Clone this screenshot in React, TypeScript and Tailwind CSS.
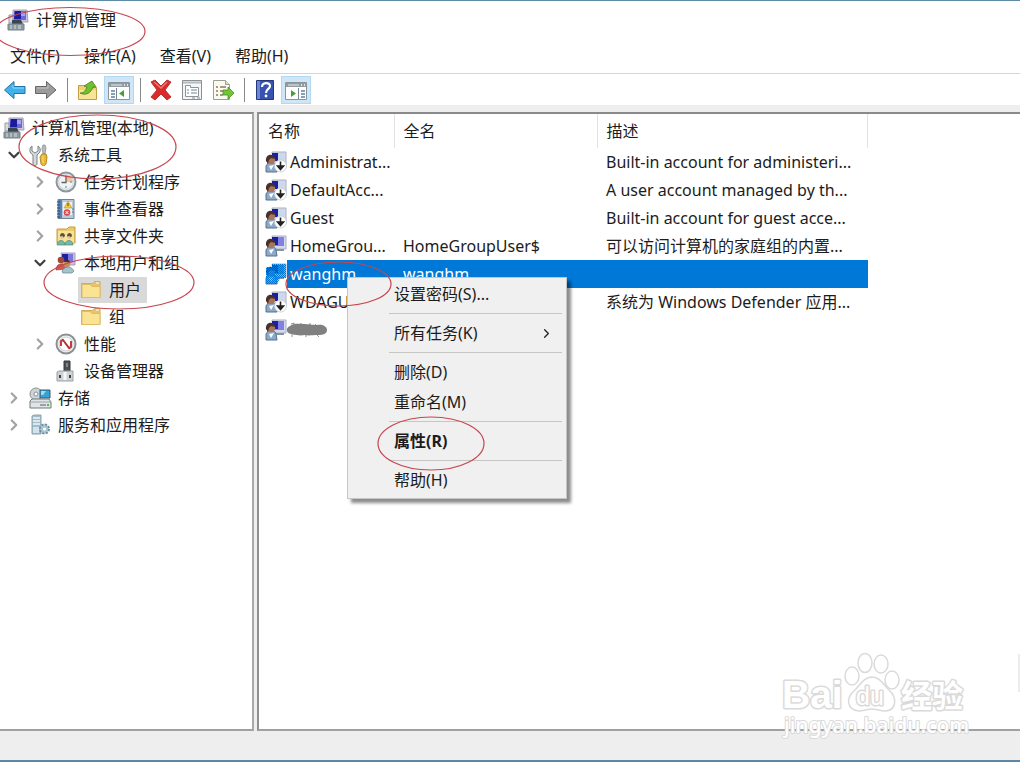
import type { ReactNode } from 'react'
import { ChevronDown, ChevronRight } from 'lucide-react'
import clsx from 'clsx'

/* ---------- icons ---------- */

function ComputerIcon() {
  return (
    <svg width="22" height="22" viewBox="0 0 22 22" aria-hidden="true">
      <path d="M6 1h14l1 12H6z" fill="#c9c6dc" stroke="#a3a1b8" />
      <path d="M7 2h12v9H7z" fill="#6f68d8" />
      <path d="M8 2h6v8H7z" fill="#1a1a9c" />
      <path d="M14 3h4v4h-4z" fill="#a9a4f0" />
      <path d="M2 6h4v8H2z" fill="#d6dce0" stroke="#8f9ba3" />
      <path d="M5 11l9 0 2 4H5z" fill="#3d4350" />
      <path d="M1 15h16v6H1z" fill="#8c999f" stroke="#76838a" />
      <path d="M3 17h2M7 17h2M11 17h3M3 19h2M7 19h2M11 19h3" stroke="#d8dfe2" />
    </svg>
  )
}

function ToolsIcon() {
  return (
    <svg width="22" height="22" viewBox="0 0 22 22" aria-hidden="true">
      <path d="M3 2v5l3 2 3-2V2c3 2 3 6 0 8l-1 1v9c0 2-4 2-4 0v-9C0 9 0 4 3 2z" fill="#d5d9db" stroke="#7b8286" />
      <path d="M14 1h2l1 3-1 6h-2l-1-6z" fill="#b7bcc0" stroke="#83898c" strokeWidth=".7" />
      <path d="M13 10h4l1 3-1 7c-1 2-4 2-5 0l-1-7z" fill="#e9b935" stroke="#b98a1c" />
      <path d="M14 12v7" stroke="#f8e08a" />
    </svg>
  )
}

function ClockIcon() {
  return (
    <svg width="22" height="22" viewBox="0 0 22 22" aria-hidden="true">
      <circle cx="11" cy="11" r="9.5" fill="#e9edef" stroke="#8f979c" strokeWidth="2" />
      <circle cx="11" cy="11" r="7.3" fill="#eef4f8" stroke="#bcc4ca" strokeWidth=".6" />
      <path d="M11 4a7 7 0 0 1 7 7h-7z" fill="#f2c29a" />
      <path d="M11 4.500v7H6.500" fill="none" stroke="#6b6259" strokeWidth="1.300" />
      <path d="M17 11h-2M11 17v-2" stroke="#6d7980" />
    </svg>
  )
}

function EventIcon() {
  return (
    <svg width="22" height="22" viewBox="0 0 22 22" aria-hidden="true">
      <path d="M3 1.500h16v19H3z" fill="#b9cbdb" stroke="#6d8499" />
      <path d="M3 2h4v18H3z" fill="#5b82ae" />
      <path d="M2 4h3M2 7h3M2 10h3M2 13h3M2 16h3M2 19h3" stroke="#2f4b6b" />
      <path d="M8 4h9v13H8z" fill="#edf2f6" />
      <path d="M13 3l4 7H9z" fill="#f3c83c" stroke="#c29420" strokeWidth=".6" />
      <path d="M13 5v3" stroke="#5b4a10" />
      <circle cx="12" cy="14.500" r="3.300" fill="#d8474a" />
      <path d="M10.500 13l3 3M13.500 13l-3 3" stroke="#fff" />
      <path d="M17 11h2M17 14h2" stroke="#5579a0" />
    </svg>
  )
}

function SharedFolderIcon() {
  return (
    <svg width="22" height="22" viewBox="0 0 22 22" aria-hidden="true">
      <path d="M2 4h10l2-2h6v16H2z" fill="#eccb6a" stroke="#c49c3c" />
      <path d="M3 6h16v12H3z" fill="#f8e19a" />
      <path d="M5 11c0-4 5-4 5 0l-2 2-2-1zM12 11c0-4 5-4 5 0l-2 2-2-1z" fill="#5c5535" />
      <path d="M2 20c0-6 8-6 8 0zM10 20c0-6 8-6 8 0z" fill="#77b8a6" stroke="#4c8d7c" strokeWidth=".7" />
      <circle cx="7" cy="12.500" r="1.500" fill="#e5c89a" />
      <circle cx="14" cy="12.500" r="1.500" fill="#e5c89a" />
    </svg>
  )
}

function UsersIcon() {
  return (
    <svg width="22" height="22" viewBox="0 0 22 22" aria-hidden="true">
      <path d="M6 1h14v12H8z" fill="#c6c4dc" stroke="#a3a1b8" />
      <path d="M7 2h11v8H7z" fill="#7a76dd" />
      <path d="M7 2h6v7H7z" fill="#1d1d9e" />
      <circle cx="6" cy="8" r="3.300" fill="#9c4937" />
      <path d="M1 18c0-8 10-8 11-1z" fill="#cf5a4d" stroke="#8b3a35" strokeWidth=".6" />
      <circle cx="12" cy="12" r="3.300" fill="#c98d62" />
      <path d="M9 10c1-3 6-3 6 1l-3-1z" fill="#453029" />
      <path d="M7 20c1-6 9-7 12-1l-2 2H8z" fill="#a5c3cd" stroke="#62838f" strokeWidth=".7" />
    </svg>
  )
}

function FolderIcon() {
  return (
    <svg width="22" height="22" viewBox="0 0 22 22" aria-hidden="true">
      <path d="M1.500 4.500h11l2-2h5.500v16H1.500z" fill="#e6c46c" stroke="#d3ae56" />
      <path d="M2 5.500h8l2 2h8v11H2z" fill="#fbe394" stroke="#dfbd66" />
      <path d="M16 4h3" stroke="#fff" />
    </svg>
  )
}

function PerformanceIcon() {
  return (
    <svg width="22" height="22" viewBox="0 0 22 22" aria-hidden="true">
      <circle cx="11" cy="11" r="9.500" fill="#f5f6f6" stroke="#8b9093" strokeWidth="2" />
      <circle cx="11" cy="11" r="7" fill="#fff" stroke="#b9bdbf" strokeWidth=".8" />
      <path d="M6 13V8l2-1 6 8 2-1V8" fill="none" stroke="#c93b3b" strokeWidth="2" />
      <path d="M7 6l8 10" stroke="#9a2e2e" />
    </svg>
  )
}

function DeviceIcon() {
  return (
    <svg width="22" height="22" viewBox="0 0 22 22" aria-hidden="true">
      <path d="M9 1h6v10H9z" fill="#4c5053" stroke="#36393b" />
      <path d="M11 3h2v4h-2z" fill="#808589" />
      <path d="M2 12l2-1h14v10H2z" fill="#cfd3d5" stroke="#9ba0a4" />
      <path d="M4 15h2v3H4zM14 15h2v3h-2z" fill="#3c4144" />
      <path d="M10 12v8" stroke="#f6f7f8" strokeWidth="3" />
    </svg>
  )
}

function StorageIcon() {
  return (
    <svg width="24" height="22" viewBox="0 0 24 22" aria-hidden="true">
      <circle cx="8" cy="7" r="6" fill="#cdd3d6" stroke="#8a9296" />
      <circle cx="8" cy="7" r="2" fill="#fff" stroke="#8a9296" />
      <path d="M12 3h10v8H12z" fill="#35a3d6" stroke="#3c5b6b" />
      <path d="M13 4h5l-3 4h-2z" fill="#a2dcf4" />
      <path d="M2 14l2-2h17l2 3v6H2z" fill="#e1e5e7" stroke="#6f787d" />
      <path d="M2 15h21" stroke="#99a1a5" />
      <path d="M12 18h6" stroke="#555d61" />
      <path d="M19 17h2v2h-2z" fill="#4fbf3d" />
    </svg>
  )
}

function ServicesIcon() {
  return (
    <svg width="22" height="22" viewBox="0 0 22 22" aria-hidden="true">
      <path d="M3 2l2-1h7v19H3z" fill="#a5bdc9" stroke="#8aa5b2" />
      <path d="M4 4h7M4 7h7M4 10h7" stroke="#eef5f8" strokeWidth="1.500" />
      <path d="M4 13h6v6H4z" fill="#d4e2e9" />
      <circle cx="15.500" cy="15" r="4.500" fill="#b8ccd6" stroke="#6c8ea0" strokeWidth="2" strokeDasharray="2.200 1.300" />
      <circle cx="15.500" cy="15" r="3.600" fill="#a9c3d0" />
      <circle cx="15.500" cy="15" r="1.600" fill="#fff" />
    </svg>
  )
}

function AccountIcon({ disabled, selected }: { disabled?: boolean; selected?: boolean }) {
  return (
    <svg width="22" height="22" viewBox="0 0 22 22" aria-hidden="true">
      <path d="M7 1h14v13H9z" fill="#d3dbe8" stroke="#a9b0c6" />
      <path d="M8 2h11v9H8z" fill={disabled ? '#cad9ef' : '#837fe4'} />
      <path d="M7 2h6v8H7z" fill="#1c1f9f" />
      <path d="M10 14h9v2h-9z" fill="#8894a4" />
      <path d="M1 21v-6c2-5 9-5 10 0l1 6z" fill="#8ca9c9" stroke="#56708f" />
      <circle cx="6" cy="9" r="4.200" fill="#a8745a" />
      <path d="M1 10c-1-8 9-8 9-2l-4-1-2 2-1 4z" fill="#4a302a" />
      <path d="M4 15l2 4 3-5" fill="#fff" />
      {disabled && (
        <>
          <circle cx="15.500" cy="15" r="6" fill="#fff" stroke="#c2c8ce" strokeWidth=".8" />
          <path d="M15.500 10.500v7M12.500 15l3 3.500 3-3.500z" fill="#222" stroke="#222" strokeWidth="1.600" />
        </>
      )}
      {selected && (
        <>
          <defs>
            <pattern id="checks" width="2" height="2" patternUnits="userSpaceOnUse">
              <path d="M0 0h1v1H0zM1 1h1v1H1z" fill="#0078d7" />
            </pattern>
          </defs>
          <path d="M7 1h14v14h-6l-3 6H1V4h6z" fill="#0078d7" opacity=".35" />
          <path d="M7 1h14v14h-6l-3 6H1V4h6z" fill="url(#checks)" />
        </>
      )}
    </svg>
  )
}

function ArrowIcon({ forward }: { forward?: boolean }) {
  return (
    <svg width="24" height="22" viewBox="0 0 24 22" aria-hidden="true">
      {forward ? (
        <path d="M1.500 7.500h11v-5L22 11l-9.500 8.500v-5h-11z" fill="#9b9b9b" stroke="#676767" strokeLinejoin="round" />
      ) : (
        <path d="M22 7.500H11v-5L1.500 11l9.500 8.500v-5h11z" fill="#3fb2ee" stroke="#27739f" strokeLinejoin="round" />
      )}
      <path d={forward ? 'M3 9h11V6' : 'M21 9H10V6'} fill="none" stroke={forward ? '#c4c4c4' : '#8ed8fb'} />
    </svg>
  )
}

function UpFolderIcon() {
  return (
    <svg width="22" height="22" viewBox="0 0 22 22" aria-hidden="true">
      <path d="M1.500 6.500h6l2 2h10v12h-18z" fill="#efd274" stroke="#c39f42" />
      <path d="M2 11h17v9H2z" fill="#f8e397" />
      <path d="M3 14c4 0 6-3 7-6L7 7l8-5 4 6-3 0c-2 6-7 9-13 6z" fill="#70bf2f" stroke="#45851a" strokeWidth=".8" />
    </svg>
  )
}

function PaneIcon({ right }: { right?: boolean }) {
  return (
    <svg width="24" height="22" viewBox="0 0 24 22" aria-hidden="true">
      <path d="M1.500 3.500h21v17h-21z" fill="#fff" stroke="#8b949b" />
      <path d="M2 4h20v4H2z" fill="#929ba3" />
      <path d="M4 6h11" stroke="#e8ecef" />
      <path d="M17 6h1M20 6h1" stroke="#fff" strokeWidth="1.500" />
      <path d={right ? 'M14.500 9v11' : 'M9.500 9v11'} stroke="#7c858d" />
      <path d={right ? 'M17 12h4M17 15h4M17 18h4' : 'M4 12h4M4 15h4M4 18h4'} stroke="#5c83a7" strokeWidth="1.300" />
      <path d={right ? 'M7 11l5 3.500L7 18z' : 'M17 11l-5 3.500 5 3.500z'} fill="#46a03a" />
    </svg>
  )
}

function DeleteIcon() {
  return (
    <svg width="24" height="22" viewBox="0 0 24 22" aria-hidden="true">
      <path d="M2 3l4-2 6 6 6-6 4 2-6 8 6 7-4 3-6-6-6 6-4-3 6-7z" fill="#d92b2b" stroke="#b93334" strokeLinejoin="round" />
      <path d="M5 3l7 6 6-6" fill="none" stroke="#f07a72" strokeWidth="1.500" />
    </svg>
  )
}

function PropertiesIcon() {
  return (
    <svg width="22" height="22" viewBox="0 0 22 22" aria-hidden="true">
      <path d="M1.500 1.500h19v19h-19z" fill="#f4f5f6" stroke="#8a8f93" />
      <path d="M2 3.500h18" stroke="#b5babd" strokeWidth="2" />
      <path d="M4.500 6.500h5v2h8v9h-13z" fill="#fff" stroke="#8c9398" />
      <path d="M6 11h2M10 11h6M6 14h2M10 14h6" stroke="#6f8796" />
      <path d="M11 19h3M16 19h3" stroke="#8a8f93" />
    </svg>
  )
}

function ExportIcon() {
  return (
    <svg width="22" height="22" viewBox="0 0 22 22" aria-hidden="true">
      <path d="M1.500 1.500h12l4 4v15h-16z" fill="#fbfaf0" stroke="#9c9e93" />
      <path d="M13.500 1.500v4h4" fill="#e3e1cf" stroke="#9c9e93" />
      <path d="M4 8h2M8 8h6M4 12h2M8 12h3M4 16h2M8 16h3" stroke="#8a7a55" strokeWidth="1.300" />
      <path d="M11 11h5V8l6 6-6 6v-4h-5z" fill="#71c438" stroke="#4b8f20" strokeWidth=".8" />
    </svg>
  )
}

function HelpIcon() {
  return (
    <svg width="20" height="22" viewBox="0 0 20 22" aria-hidden="true">
      <path d="M1.500 1.500h17v19h-17z" fill="#3653b0" stroke="#24377c" />
      <path d="M2 2h3v18H2z" fill="#6d86d3" />
      <path d="M7 8c0-5 8-5 8-1 0 3-4 3-4 7" fill="none" stroke="#fff" strokeWidth="2.200" />
      <circle cx="11" cy="17" r="1.400" fill="#fff" />
    </svg>
  )
}

/* ---------- data ---------- */

interface TreeNode {
  label: string
  level: 0 | 1 | 2 | 3
  icon: ReactNode
  state?: 'open' | 'closed'
  selected?: boolean
}

const tree: TreeNode[] = [
  { label: '计算机管理(本地)', level: 0, icon: <ComputerIcon /> },
  { label: '系统工具', level: 1, icon: <ToolsIcon />, state: 'open' },
  { label: '任务计划程序', level: 2, icon: <ClockIcon />, state: 'closed' },
  { label: '事件查看器', level: 2, icon: <EventIcon />, state: 'closed' },
  { label: '共享文件夹', level: 2, icon: <SharedFolderIcon />, state: 'closed' },
  { label: '本地用户和组', level: 2, icon: <UsersIcon />, state: 'open' },
  { label: '用户', level: 3, icon: <FolderIcon />, selected: true },
  { label: '组', level: 3, icon: <FolderIcon /> },
  { label: '性能', level: 2, icon: <PerformanceIcon />, state: 'closed' },
  { label: '设备管理器', level: 2, icon: <DeviceIcon /> },
  { label: '存储', level: 1, icon: <StorageIcon />, state: 'closed' },
  { label: '服务和应用程序', level: 1, icon: <ServicesIcon />, state: 'closed' },
]

interface Account {
  name: string
  fullName?: string
  description?: string
  disabled?: boolean
  selected?: boolean
  redacted?: boolean
}

const accounts: Account[] = [
  { name: 'Administrat...', description: 'Built-in account for administeri...', disabled: true },
  { name: 'DefaultAcc...', description: 'A user account managed by th...', disabled: true },
  { name: 'Guest', description: 'Built-in account for guest acce...', disabled: true },
  { name: 'HomeGrou...', fullName: 'HomeGroupUser$', description: '可以访问计算机的家庭组的内置...' },
  { name: 'wanghm', fullName: 'wanghm', selected: true },
  { name: 'WDAGU...', description: '系统为 Windows Defender 应用...', disabled: true },
  { name: '', redacted: true },
]

const menus = ['文件(F)', '操作(A)', '查看(V)', '帮助(H)']

/* ---------- parts ---------- */

function ToolButton({ label, active, children }: { label: string; active?: boolean; children: ReactNode }) {
  return (
    <button
      type="button"
      aria-label={label}
      className={clsx(
        'flex h-7 w-[30px] items-center justify-center',
        active && 'border border-[#b2d8f2] bg-[#cfe6f7]'
      )}
    >
      {children}
    </button>
  )
}

function ToolDivider() {
  return (
    <div className="flex w-[10px] justify-center">
      <div className="h-6 w-px bg-[#8a8a8a]" />
    </div>
  )
}

function TreeRow({ node }: { node: TreeNode }) {
  return (
    <li
      className={clsx(
        'flex h-[27px] items-center',
        node.level < 2 && 'pl-px',
        node.level === 2 && 'pl-[27px]',
        node.level === 3 && 'pl-[78px]'
      )}
    >
      {(node.level === 1 || node.level === 2) && (
        <span className="flex w-[26px] shrink-0 justify-center">
          {node.state === 'open' && <ChevronDown size={18} strokeWidth={3} className="text-[#404040]" />}
          {node.state === 'closed' && <ChevronRight size={18} strokeWidth={3} className="text-[#a3a3a3]" />}
        </span>
      )}
      <button
        type="button"
        className={clsx('flex h-[26px] items-center gap-[5px] pr-1.5', node.selected && 'bg-[#d9d9d9]')}
      >
        <span className="flex w-[26px] shrink-0 justify-center">{node.icon}</span>
        <span>{node.label}</span>
      </button>
    </li>
  )
}

function AccountRow({ account }: { account: Account }) {
  return (
    <tr className={clsx('h-7', account.selected && 'text-white')}>
      <td className="p-0">
        <div className="flex h-7 items-center pl-1.5">
          <AccountIcon disabled={account.disabled} selected={account.selected} />
          <span className={clsx('flex h-7 flex-1 items-center pl-[3px]', account.selected && 'bg-[#0078d7]')}>
            {account.name}
            {account.redacted && (
              <svg width="42" height="20" viewBox="0 0 42 20" className="-ml-1" aria-hidden="true">
                <path d="M5 4l3-1v12M15 3v4M24 3v4M29 4l3 3M6 13v4M20 14v3M31 15l2 2" fill="none" stroke="#8d8d8d" />
                <path
                  d="M4 6c4-3 9-2 13-2 6 0 9 1 14 1 5-1 10 1 10 5s-4 5-9 5-9 1-13 0c-5 1-9 0-13-1-6 0-7-6-2-8z"
                  fill="#808080"
                />
              </svg>
            )}
          </span>
        </div>
      </td>
      <td className={clsx('p-0 pl-[9px]', account.selected && 'bg-[#0078d7]')}>{account.fullName}</td>
      <td className={clsx('p-0 pl-[9px]', account.selected && 'bg-[#0078d7]')}>{account.description}</td>
    </tr>
  )
}

function MenuItem({ label, bold, submenu }: { label: string; bold?: boolean; submenu?: boolean }) {
  return (
    <button
      type="button"
      role="menuitem"
      className={clsx('flex h-[30px] w-full items-center justify-between pl-[46px] pr-3', bold && 'font-bold')}
    >
      {label}
      {submenu && <ChevronRight size={15} className="text-[#222]" />}
    </button>
  )
}

function MenuDivider() {
  return <div role="separator" className="my-1 ml-[41px] mr-1 h-px bg-[#c6c6c6]" />
}

function ContextMenu() {
  return (
    <div
      role="menu"
      className="absolute left-[347px] top-[276px] w-[220px] border border-[#c6c6c6] bg-[#f0f0f0] pb-[3px] pt-px shadow-[4px_4px_3px_rgba(0,0,0,0.45)]"
    >
      <MenuItem label="设置密码(S)..." />
      <MenuDivider />
      <MenuItem label="所有任务(K)" submenu />
      <MenuDivider />
      <MenuItem label="删除(D)" />
      <MenuItem label="重命名(M)" />
      <MenuDivider />
      <MenuItem label="属性(R)" bold />
      <MenuDivider />
      <MenuItem label="帮助(H)" />
    </div>
  )
}

/* Hand-drawn red rings around the steps to follow */
function Rings() {
  return (
    <svg
      className="pointer-events-none absolute left-0 top-0"
      width="500"
      height="480"
      fill="none"
      stroke="#c8454f"
      strokeWidth="1.200"
      aria-hidden="true"
    >
      <ellipse cx="70" cy="30.500" rx="75" ry="24" />
      <ellipse cx="97.500" cy="146" rx="78.500" ry="32" />
      <ellipse cx="119" cy="281.500" rx="75" ry="26.500" />
      <ellipse cx="338.500" cy="283" rx="52.500" ry="22" />
      <ellipse cx="431" cy="442.500" rx="53" ry="26.500" />
    </svg>
  )
}

function Watermark() {
  return (
    <svg
      className="pointer-events-none absolute bottom-[18px] right-0 font-['Liberation_Sans','Noto_Sans_CJK_SC',sans-serif]"
      width="240"
      height="94"
      viewBox="0 0 240 94"
      fill="#fff"
      stroke="#dadada"
      strokeWidth="1.500"
      strokeLinejoin="round"
    >
      <g fontWeight="700" paintOrder="stroke" strokeWidth="3">
        <text x="2" y="58" fontSize="39">Bai</text>
        <text x="121" y="57" fontSize="31">经验</text>
      </g>
      <ellipse cx="72" cy="26" rx="7" ry="9" />
      <ellipse cx="85" cy="13" rx="7" ry="9.500" />
      <ellipse cx="101" cy="14" rx="7" ry="9" />
      <ellipse cx="112" cy="30" rx="7" ry="9" />
      <path d="M92 27c8 0 12 8 17 13 9 8 7 21-4 21-5 0-8-2-13-2s-8 2-13 2c-12-1-14-13-4-21 5-5 9-13 17-13z" />
      <text x="76" y="55" fontSize="25" paintOrder="stroke" strokeWidth="3">du</text>
      <text
        x="4"
        y="83"
        fontSize="21"
        fontWeight="500"
        paintOrder="stroke"
        strokeWidth="2"
        className="font-['Noto_Sans',sans-serif]"
      >
        jingyan.baidu.com
      </text>
      <path d="M239 4v38" stroke="#e6e6e6" />
    </svg>
  )
}

export default function App() {
  return (
    <div className="relative flex min-h-screen flex-col overflow-hidden border-t border-[#5d8aa5] bg-white font-['Noto_Sans','Noto_Sans_CJK_SC',sans-serif] text-[16px] leading-6 text-[#1c1c1c]">
      <header className="flex h-[38px] items-center gap-[7px] pl-[7px]">
        <ComputerIcon />
        <h1>计算机管理</h1>
      </header>

      <nav className="flex h-[34px] items-center gap-6 pl-[10px]">
        {menus.map((menu) => (
          <button key={menu} type="button">
            {menu}
          </button>
        ))}
      </nav>

      <div className="flex h-8 items-center gap-px border-t border-[#d5d5d5]">
        <ToolButton label="后退"><ArrowIcon /></ToolButton>
        <ToolButton label="前进"><ArrowIcon forward /></ToolButton>
        <ToolDivider />
        <ToolButton label="上移"><UpFolderIcon /></ToolButton>
        <ToolButton label="显示控制台树" active><PaneIcon /></ToolButton>
        <ToolDivider />
        <ToolButton label="删除"><DeleteIcon /></ToolButton>
        <ToolButton label="属性"><PropertiesIcon /></ToolButton>
        <ToolButton label="导出列表"><ExportIcon /></ToolButton>
        <ToolDivider />
        <ToolButton label="帮助"><HelpIcon /></ToolButton>
        <ToolButton label="显示操作窗格" active><PaneIcon right /></ToolButton>
      </div>

      <main className="flex flex-1 gap-[3px] bg-[#eeeeee] pt-[7px]">
        <aside className="w-[254px] shrink-0 border-y-2 border-r-2 border-b-[#a0a0a0] border-r-[#a8a8a8] border-t-[#8a8a8a] bg-white">
          <ul>
            {tree.map((node) => (
              <TreeRow key={node.label} node={node} />
            ))}
          </ul>
        </aside>

        <section className="min-w-0 flex-1 border-y-2 border-l-2 border-b-[#a0a0a0] border-l-[#909090] border-t-[#8a8a8a] bg-white">
          <table className="w-[609px] table-fixed border-collapse text-left">
            <thead>
              <tr className="h-[34px]">
                <th className="w-[135px] border-r border-[#e2e2e2] p-0 pl-[9px] font-normal">名称</th>
                <th className="w-[203px] border-r border-[#e2e2e2] p-0 pl-[9px] font-normal">全名</th>
                <th className="border-r border-[#e2e2e2] p-0 pl-[9px] font-normal">描述</th>
              </tr>
            </thead>
            <tbody className="whitespace-nowrap">
              {accounts.map((account) => (
                <AccountRow key={account.name} account={account} />
              ))}
            </tbody>
          </table>
        </section>
      </main>

      <footer className="h-[31px] border-b-2 border-[#5f86a3] bg-[#eeeeee]" />

      <ContextMenu />
      <Watermark />
      <Rings />
    </div>
  )
}
